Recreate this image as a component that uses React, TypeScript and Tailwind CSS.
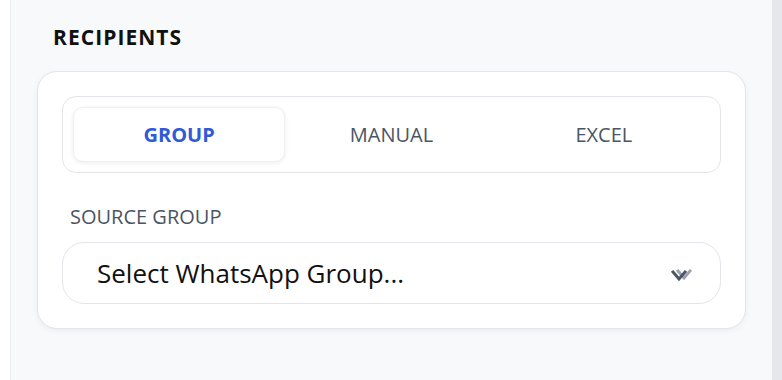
import { useState } from 'react'

const TABS = ['GROUP', 'MANUAL', 'EXCEL']

export default function App() {
  const [tab, setTab] = useState('GROUP')

  return (
    <div className="flex h-[380px] w-full overflow-hidden font-['Open_Sans',sans-serif]">
      {/* left rail */}
      <div className="w-[11px] shrink-0 border-r border-[#eceef3] bg-white" />

      {/* main */}
      <div className="flex-1 bg-[#f8f9fb] px-[26px] pt-[23px]">
        <h2 className="pl-4 text-[21px] leading-[28px] font-bold tracking-[0.05em] text-[#111]">RECIPIENTS</h2>

        <div className="mt-[20px] rounded-[20px] border border-[#e3e5ea] bg-white p-6 shadow-[0_2px_6px_rgba(17,24,39,0.05)]">
          {/* tabs */}
          <div className="grid grid-cols-3 rounded-[14px] border border-[#e3e5ea] bg-white p-[10px]">
            {TABS.map((t) => {
              const active = t === tab
              return (
                <button
                  className={
                    active
                      ? 'h-[55px] rounded-[10px] border border-[#eef0f3] bg-white text-[20px] font-bold text-[#2f5ad8] shadow-[0_1px_4px_rgba(17,24,39,0.08)]'
                      : 'h-[55px] rounded-[10px] border border-transparent text-[20px] text-[#4b5563]'
                  }
                  key={t}
                  onClick={() => setTab(t)}
                  type="button"
                >
                  {t}
                </button>
              )
            })}
          </div>

          {/* source group */}
          <p className="mt-[30px] pl-2 text-[20px] leading-[28px] text-[#4b5563]">SOURCE GROUP</p>
          <div className="mt-[11px] flex h-[62px] items-center justify-between rounded-[22px] border border-[#e3e5ea] bg-white pr-[26px] pl-[34px]">
            <span className="text-[26px] text-[#111]">Select WhatsApp Group...</span>
            <svg className="mt-[6px]" fill="none" height="16" viewBox="0 0 24 16" width="24">
              <polyline points="8,3 14,10 20,3" stroke="#9ca3af" strokeLinecap="square" strokeWidth="3" />
              <polyline points="3,4 9,11 15,4" stroke="#4b5563" strokeLinecap="square" strokeWidth="3" />
            </svg>
          </div>
        </div>
      </div>

      {/* scrollbar */}
      <div className="w-[10px] shrink-0 bg-[#e5e7eb]" />
    </div>
  )
}
